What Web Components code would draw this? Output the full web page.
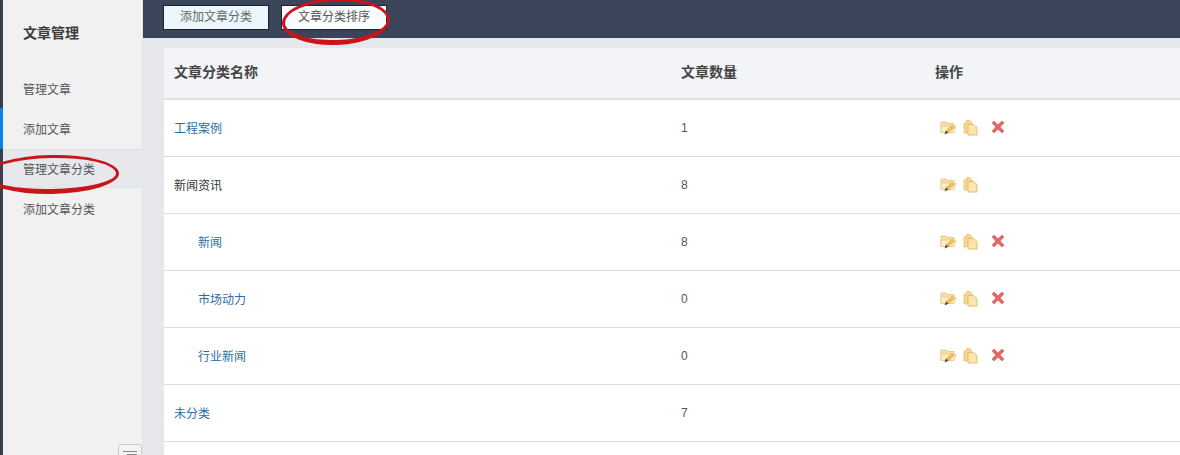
<!DOCTYPE html>
<html lang="zh"><head><meta charset="utf-8"><title>文章管理</title>
<style>
html,body{margin:0;padding:0;height:455px;overflow:hidden}
body{font-family:"Liberation Sans","Noto Sans CJK SC",sans-serif;font-size:12px;color:#444}
</style></head><body>
<app-shell>
  <side-nav slot="side">
    <nav-item>管理文章</nav-item>
    <nav-item marked>添加文章</nav-item>
    <nav-item active>管理文章分类</nav-item>
    <nav-item>添加文章分类</nav-item>
  </side-nav>
  <top-bar slot="top">
    <bar-button>添加文章分类</bar-button>
    <bar-button plain>文章分类排序</bar-button>
  </top-bar>
  <cat-table>
    <cat-row link count="1" actions="edit copy del">工程案例</cat-row>
    <cat-row count="8" actions="edit copy">新闻资讯</cat-row>
    <cat-row link sub count="8" actions="edit copy del">新闻</cat-row>
    <cat-row link sub count="0" actions="edit copy del">市场动力</cat-row>
    <cat-row link sub count="0" actions="edit copy del">行业新闻</cat-row>
    <cat-row link count="7" actions="">未分类</cat-row>
  </cat-table>
</app-shell>
<script>
function def(name,html,init){
  customElements.define(name,class extends HTMLElement{
    connectedCallback(){
      if(this.shadowRoot)return;
      const r=this.attachShadow({mode:'open'});
      r.innerHTML=html;
      if(init)init(this,r);
    }
  });
}
def('app-shell',`<style>
:host{display:grid;grid-template-columns:3px 140px 1fr;grid-template-rows:455px;height:455px;width:1180px;position:relative;overflow:hidden;background:#e6e8eb}
.edge{background:#3a3f4c}
.main{display:flex;flex-direction:column;min-width:0;min-height:0}
.content{padding:10px 0 0 21px;flex:1;min-height:0}
.ring{position:absolute;z-index:3;border:3px solid #c8151b;border-bottom-width:5px;border-radius:50%;box-sizing:border-box;pointer-events:none}
.r1{left:282px;top:-2px;width:108px;height:47px;transform:rotate(-2deg)}
.r2{left:-16px;top:155px;width:135px;height:39px;transform:rotate(-1deg)}
</style>
<div class="edge"></div><slot name="side"></slot>
<div class="main"><slot name="top"></slot><div class="content"><slot></slot></div></div>
<div class="ring r1"></div><div class="ring r2"></div>`);
def('side-nav',`<style>
:host{display:flex;flex-direction:column;background:#f1f1f1;border-right:1px solid #e2e4e7;box-sizing:border-box;position:relative;z-index:1;min-height:0}
h1{margin:0;height:69px;box-sizing:border-box;padding:23px 0 0 20px;font-size:14px;line-height:20px;font-weight:700;color:#3c3c3c}
.list{display:flex;flex-direction:column}
.toggle{position:absolute;right:0;bottom:-13px;width:24px;height:24px;border:1px solid #c9cbce;border-radius:3px 3px 0 0;background:#f4f4f4;box-sizing:border-box;display:flex;flex-direction:column;align-items:center;padding-top:6px;gap:2px}
.toggle i{display:block;height:1px;background:#888;width:14px}
.toggle i+i{width:10px;margin-left:4px}
</style><h1>文章管理</h1><div class="list"><slot></slot></div>
<div class="toggle"><i></i><i></i></div>`);
def('nav-item',`<style>
:host{display:block;height:40px;box-sizing:border-box;padding:1px 0 0 20px;font-size:12px;line-height:40px;color:#555;position:relative}
:host(:last-child){padding-top:2px}
:host([active]){background:#e6e8ec;height:39px;line-height:41px;padding-top:0;margin-right:-1px;border-top:1px solid #dfe1e5;border-bottom:1px solid #dfe1e5}
.mark{display:none;position:absolute;left:-3px;top:-1px;width:3px;height:41px;background:#0a84e0}
:host([marked]) .mark{display:block}
</style><span class="mark"></span><slot></slot>`);
def('top-bar',`<style>
:host{display:flex;align-items:flex-start;gap:12px;height:38px;background:#3a4559;padding:5px 0 0 20px;box-sizing:border-box;flex:none}
</style><slot></slot>`);
def('bar-button',`<style>
:host{display:block;width:106px;height:25px;box-sizing:border-box;background:#eaf6fc;border:1px solid #1c2433;font-size:12px;line-height:23px;text-align:center;color:#666}
:host([plain]){background:#f8fcfe;color:#555}
</style><slot></slot>`);
def('cat-table',`<style>
:host{display:block;background:#fff;height:407px;overflow:hidden}
.head{display:grid;grid-template-columns:507px 254px 1fr;height:52px;box-sizing:border-box;background:#f3f4f8;border-bottom:2px solid #dfe0e3;align-items:center;font-size:14px;line-height:20px;font-weight:700;color:#444;padding:0 0 2px 10px}
</style><div class="head"><span>文章分类名称</span><span>文章数量</span><span>操作</span></div><slot></slot>`);
const icons={
edit:`<svg width="17" height="15" viewBox="0 0 17 15"><path d="M1 2h5.500l1 1.500H14V12H1z" fill="#f5dfa6" stroke="#e2c27e" stroke-width=".8"/><path d="M1 6h15l-2 6.500H1z" fill="#fbeec6" stroke="#e6c888" stroke-width=".8"/><path d="M6 10.500l6-5 2.500 2-6 5z" fill="#eebf5c" stroke="#d6a647" stroke-width=".5"/><path d="M4.500 14.500l1.300-4 2.800 2.200z" fill="#5b5038"/></svg>`,
copy:`<svg width="15" height="17" viewBox="0 0 15 17"><path d="M1 4h2.500V1.500H7L9 4v10H1z" fill="#f6d68c" stroke="#e8c377" stroke-width=".8"/><path d="M5 5.500h5.500l3.500 3v7.500H5z" fill="#fbe6ae" stroke="#e3b964" stroke-width=".9"/></svg>`,
del:`<svg width="14" height="14" viewBox="0 0 14 14"><path d="M1 3 3 1 7 4.800 11 1 13 3 9.200 7 13 11 11 13 7 9.200 3 13 1 11 4.800 7z" fill="#e4686a" stroke="#d85f62" stroke-width=".6"/></svg>`};
def('cat-row',`<style>
:host{display:grid;grid-template-columns:507px 254px 1fr;height:57px;box-sizing:border-box;border-bottom:1px solid #dcdde0;align-items:center;padding-left:10px;font-size:12px;color:#333}
:host([link]) .n{color:#2b6ea6}
:host([sub]) .n{padding-left:24px}
.n{padding-bottom:2px}
.c{color:#555}
.a{display:flex;align-items:center;padding:0 0 2px 5px}
.a span{display:flex}
.a .edit{width:23px}
.a .copy{width:28px}
</style><span class="n"><slot></slot></span><span class="c"></span><span class="a"></span>`,(h,r)=>{
  r.querySelector('.c').textContent=h.getAttribute('count');
  r.querySelector('.a').innerHTML=(h.getAttribute('actions')||'').split(' ').filter(Boolean).map(k=>`<span class="${k}">${icons[k]}</span>`).join('');
});
</script>
</body></html>
